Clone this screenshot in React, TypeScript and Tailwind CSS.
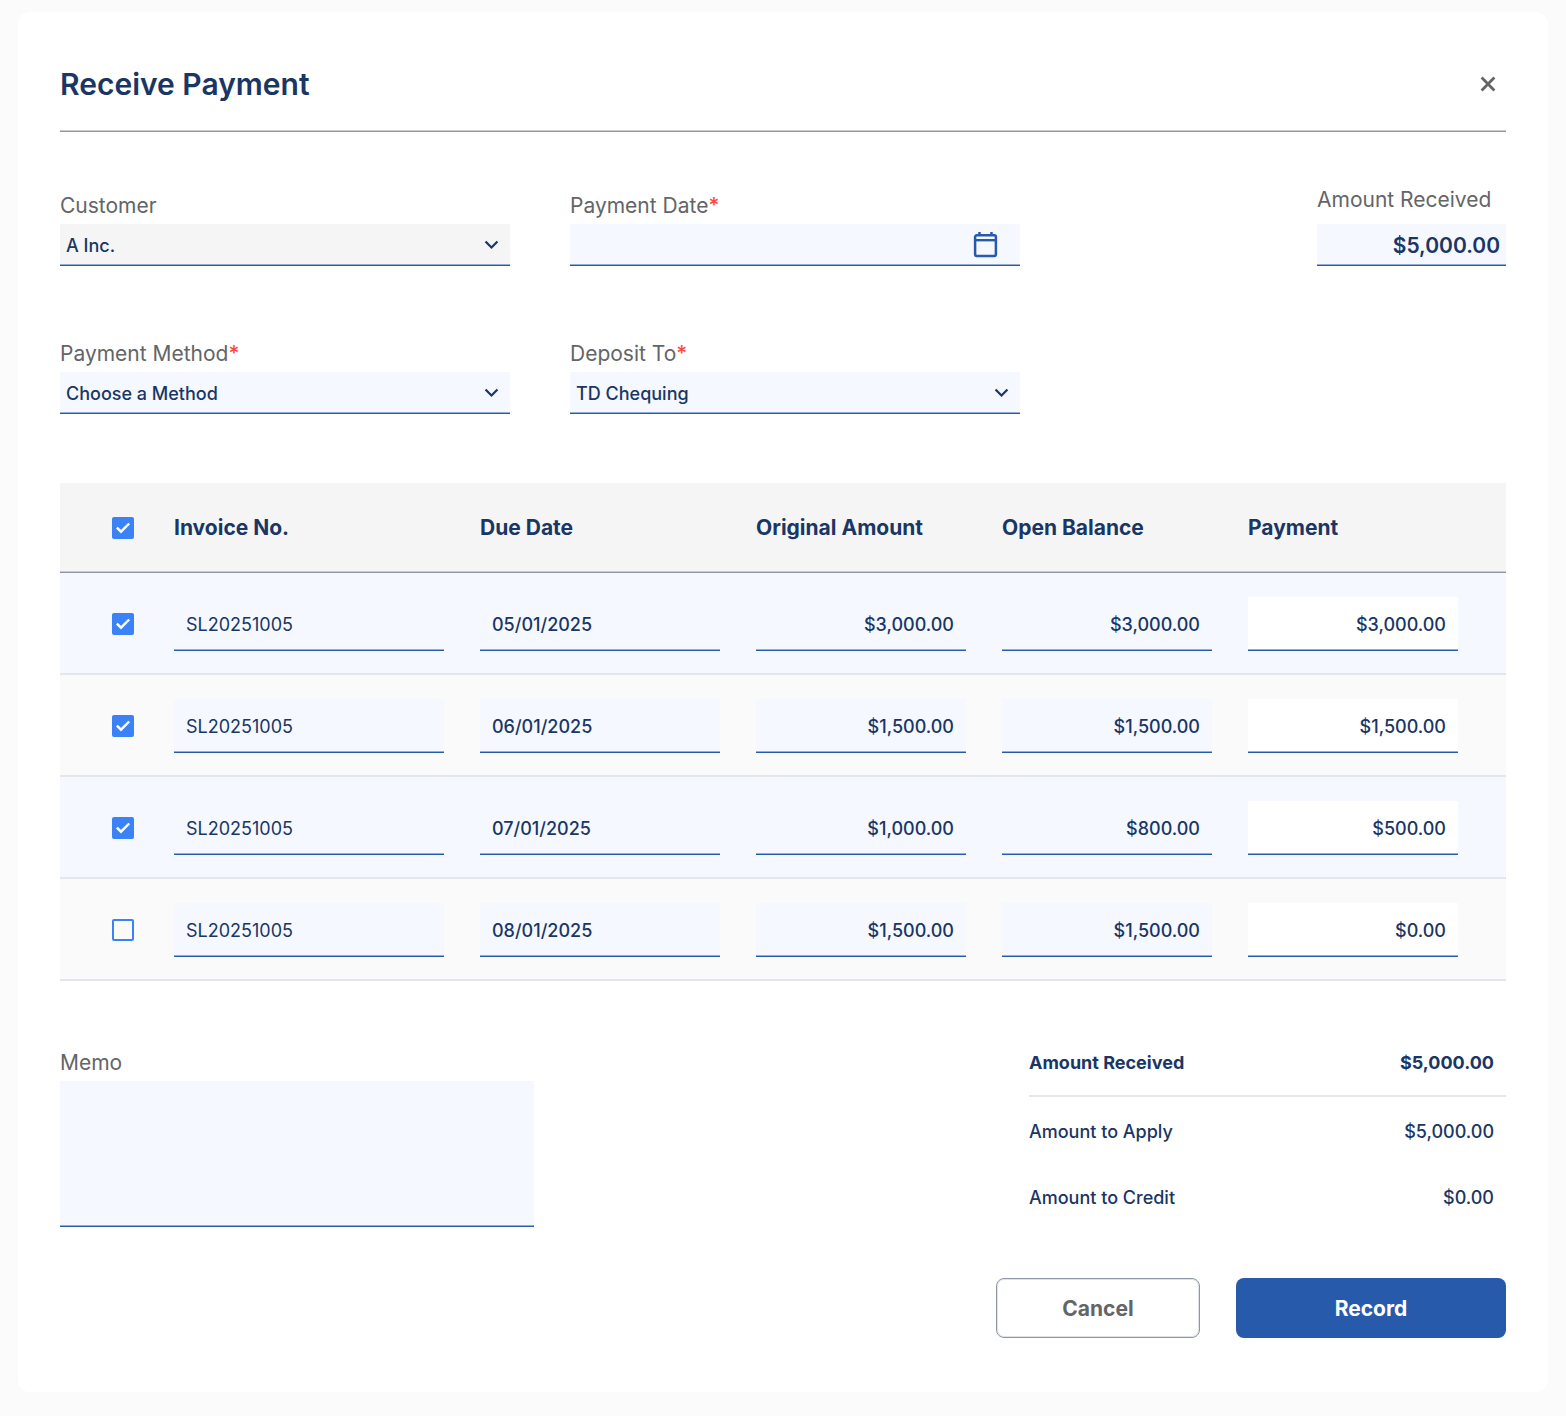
import React, { useState } from 'react';

interface Invoice {
  id: number;
  number: string;
  dueDate: string;
  original: string;
  balance: string;
  payment: string;
  selected: boolean;
}

const INVOICES: Invoice[] = [
  { id: 1, number: 'SL20251005', dueDate: '05/01/2025', original: '$3,000.00', balance: '$3,000.00', payment: '$3,000.00', selected: true },
  { id: 2, number: 'SL20251005', dueDate: '06/01/2025', original: '$1,500.00', balance: '$1,500.00', payment: '$1,500.00', selected: true },
  { id: 3, number: 'SL20251005', dueDate: '07/01/2025', original: '$1,000.00', balance: '$800.00', payment: '$500.00', selected: true },
  { id: 4, number: 'SL20251005', dueDate: '08/01/2025', original: '$1,500.00', balance: '$1,500.00', payment: '$0.00', selected: false },
];

const underline = 'border-b border-[#285aac] pt-0.5 shadow-[inset_0_-1px_#94add6] outline-none';

const ChevronIcon = () => (
  <svg viewBox="0 0 24 24" className="pointer-events-none absolute top-2 right-[5px] size-[27px] fill-[#1a3665]">
    <path d="M16.59 7.79 12 12.37 7.41 7.79 6 9.2l6 6 6-6z" />
  </svg>
);

const CalendarIcon = () => (
  <svg
    viewBox="0 0 27 27"
    fill="none"
    className="pointer-events-none absolute top-2 right-[21px] size-[27px] stroke-[#285aac]"
  >
    <rect x="3.1" y="3.3" width="20.8" height="20.6" rx="1.6" strokeWidth="2.5" />
    <path d="M3 8.2h21" strokeWidth="2.4" />
    <path d="M7.5 0v3M19.5 0v3" strokeWidth="2.5" />
  </svg>
);

// Label above a form control
interface FieldProps {
  id: string;
  label: string;
  required?: boolean;
  children: React.ReactNode;
}

const Field: React.FC<FieldProps> = ({ id, label, required, children }) => (
  <div className="flex flex-col gap-0.5">
    <label htmlFor={id} className="text-[21px] leading-8 text-[#636567]">
      {label}
      {required && <span className="font-medium text-[#ff4842]">*</span>}
    </label>
    <div className="relative">{children}</div>
  </div>
);

interface CheckboxProps {
  label: string;
  checked: boolean;
  onChange: () => void;
}

const Checkbox: React.FC<CheckboxProps> = ({ label, checked, onChange }) => (
  <span className="relative block size-[22px]">
    <input
      type="checkbox"
      aria-label={label}
      checked={checked}
      onChange={onChange}
      className="block size-[22px] appearance-none rounded-xs border-2 border-[#3b82f6] checked:bg-[#3b82f6]"
    />
    {checked && (
      <svg viewBox="0 0 22 22" className="pointer-events-none absolute inset-0 size-[22px]">
        <path d="M4.9 10.6 9 14.7 17.2 6.5" fill="none" stroke="#fff" strokeWidth="2.4" />
      </svg>
    )}
  </span>
);

interface CellProps {
  label: string;
  value: string;
  className: string;
}

const CellInput: React.FC<CellProps> = ({ label, value, className }) => (
  <input
    aria-label={label}
    defaultValue={value}
    className={`block h-[54px] w-full px-3 text-lg text-[#1a3665] ${underline} ${className}`}
  />
);

export default function App() {
  const [invoices, setInvoices] = useState(INVOICES);
  const [allSelected, setAllSelected] = useState(true);

  const toggle = (id: number) => {
    setInvoices(invoices.map(inv => (inv.id === id ? { ...inv, selected: !inv.selected } : inv)));
  };

  const toggleAll = () => {
    setInvoices(invoices.map(inv => ({ ...inv, selected: !allSelected })));
    setAllSelected(!allSelected);
  };

  return (
    <div className="min-h-screen bg-[#fbfbfb] px-[18px] pt-3 pb-6 font-[Inter,sans-serif] text-[#1a3665]">
      <main className="rounded-xl bg-white px-[42px] pt-[42px] pb-[54px]">
        <header className="flex items-center justify-between border-b border-[#8e97a3] pt-2 pr-1.5 pb-6 shadow-[inset_0_-1px_#c8ccd2]">
          <h1 className="text-[30px] leading-[45px] font-semibold">Receive Payment</h1>
          <button type="button" aria-label="Close" className="block">
            <svg viewBox="0 0 24 24" fill="none" className="size-6 stroke-[#636567]">
              <path d="M5.6 4.6 18.4 17.4M18.4 4.6 5.6 17.4" strokeWidth="2.8" />
            </svg>
          </button>
        </header>

        <form onSubmit={e => e.preventDefault()}>
          <div className="mt-[52px] flex items-end justify-between">
            <div className="grid w-[960px] grid-cols-2 gap-[60px]">
              <Field id="customer" label="Customer">
                <select id="customer" className={`block h-[42px] w-full appearance-none bg-[#f5f5f5] px-1.5 text-lg font-medium ${underline}`}>
                  <option>A Inc.</option>
                </select>
                <ChevronIcon />
              </Field>
              <Field id="date" label="Payment Date" required>
                <input id="date" className={`block h-[42px] w-full bg-[#f5f8ff] px-1.5 text-lg font-medium ${underline}`} />
                <CalendarIcon />
              </Field>
            </div>
            <div className="flex w-[189px] flex-col gap-2">
              <label htmlFor="received" className="text-[21px] leading-8 whitespace-nowrap text-[#636567]">Amount Received</label>
              <input
                id="received"
                defaultValue="$5,000.00"
                className={`block h-[42px] w-full bg-[#f5f8ff] px-1.5 text-right text-[21px] font-semibold ${underline}`}
              />
            </div>
          </div>

          <div className="mt-[72px] grid w-[960px] grid-cols-2 gap-[60px]">
            <Field id="method" label="Payment Method" required>
              <select id="method" className={`block h-[42px] w-full appearance-none bg-[#f5f8ff] px-1.5 text-lg font-medium ${underline}`}>
                <option>Choose a Method</option>
              </select>
              <ChevronIcon />
            </Field>
            <Field id="deposit" label="Deposit To" required>
              <select id="deposit" className={`block h-[42px] w-full appearance-none bg-[#f5f8ff] px-1.5 text-lg font-medium ${underline}`}>
                <option>TD Chequing</option>
              </select>
              <ChevronIcon />
            </Field>
          </div>

          <table className="mt-[69px] w-full table-fixed border-separate border-spacing-0 text-left">
            <thead className="bg-[#f5f5f5] text-[21px]">
              <tr className="h-[90px] *:border-b *:border-[#8e97a3] *:px-[18px] *:font-bold *:shadow-[inset_0_-1px_#c8ccd2]">
                <th className="w-24">
                  <div className="flex justify-end pr-1">
                    <Checkbox label="Select all invoices" checked={allSelected} onChange={toggleAll} />
                  </div>
                </th>
                <th className="w-[306px]">Invoice No.</th>
                <th className="w-[276px]">Due Date</th>
                <th className="w-[246px]">Original Amount</th>
                <th className="w-[246px]">Open Balance</th>
                <th className="w-[276px]">Payment</th>
              </tr>
            </thead>
            <tbody>
              {invoices.map(inv => (
                <tr key={inv.id} className="bg-[#fafafa] odd:bg-[#f5f8ff] *:border-b-2 *:border-[#e3e6ea] *:px-[18px] *:pt-6 *:pb-[22px]">
                  <td>
                    <div className="flex justify-end pr-1">
                      <Checkbox label={`Select invoice ${inv.number}`} checked={inv.selected} onChange={() => toggle(inv.id)} />
                    </div>
                  </td>
                  <td><CellInput label="Invoice No." value={inv.number} className="bg-[#f5f8ff]" /></td>
                  <td><CellInput label="Due Date" value={inv.dueDate} className="bg-[#f5f8ff] font-medium" /></td>
                  <td><CellInput label="Original Amount" value={inv.original} className="bg-[#f5f8ff] text-right font-medium" /></td>
                  <td><CellInput label="Open Balance" value={inv.balance} className="bg-[#f5f8ff] text-right font-medium" /></td>
                  <td className="pr-12!"><CellInput label="Payment" value={inv.payment} className="bg-white text-right font-medium" /></td>
                </tr>
              ))}
            </tbody>
          </table>

          <div className="mt-[66px] flex items-start justify-between">
            <div className="w-[474px]">
              <Field id="memo" label="Memo">
                <textarea id="memo" className={`block h-[146px] w-full resize-none bg-[#f5f8ff] px-1.5 text-lg font-medium ${underline}`} />
              </Field>
            </div>
            <dl className="w-[477px] text-lg font-medium">
              <div className="flex justify-between border-b-2 border-[#e3e6ea] pt-0.5 pr-3 pb-[18px] font-bold">
                <dt>Amount Received</dt>
                <dd>$5,000.00</dd>
              </div>
              <div className="flex justify-between pt-[21px] pr-3">
                <dt>Amount to Apply</dt>
                <dd>$5,000.00</dd>
              </div>
              <div className="flex justify-between pt-[38px] pr-3">
                <dt>Amount to Credit</dt>
                <dd>$0.00</dd>
              </div>
            </dl>
          </div>

          <div className="mt-[51px] flex justify-end gap-9 text-[21px] font-bold">
            <button type="button" className="h-[60px] w-[204px] rounded-lg border border-[#8e97a3] pt-0.5 text-[#636567] shadow-[inset_0_0_0_1px_#dfe2e6]">Cancel</button>
            <button type="submit" className="h-[60px] w-[270px] rounded-lg bg-[#285aac] pt-0.5 text-white">Record</button>
          </div>
        </form>
      </main>
    </div>
  );
}
